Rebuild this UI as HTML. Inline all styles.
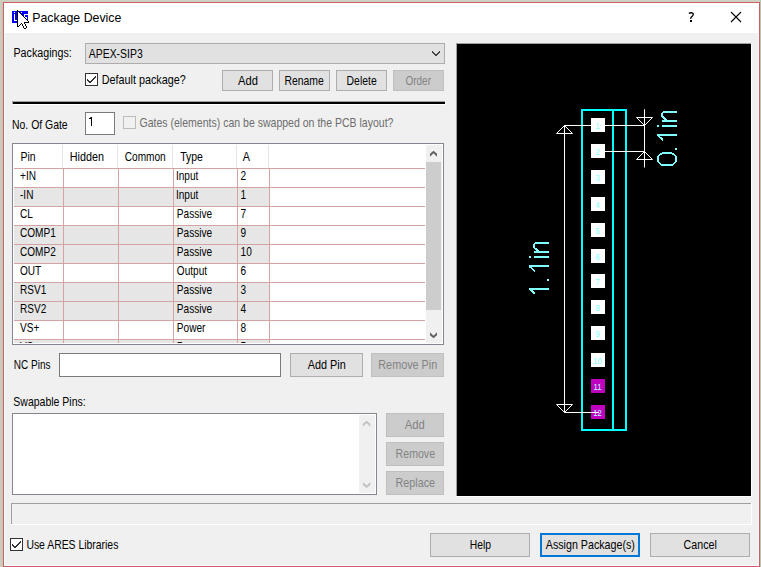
<!DOCTYPE html>
<html><head><meta charset="utf-8"><style>
html,body{margin:0;padding:0;width:761px;height:567px;overflow:hidden;background:#c9cbbb}
svg{display:block}
text{font-family:"Liberation Sans",sans-serif}
</style></head><body>
<svg width="761" height="567" viewBox="0 0 761 567">
<g shape-rendering="crispEdges">
<rect x="0" y="0" width="761" height="567" fill="#c9cbbb"/>
<rect x="0" y="0" width="1" height="567" fill="#cdcdbd"/>
<rect x="1" y="0" width="1" height="567" fill="#c8cbba"/>
<rect x="2" y="0" width="1" height="567" fill="#c2cab6"/>
<rect x="0" y="0" width="761" height="1" fill="#d0d0c2"/>
<rect x="3" y="1" width="757" height="1" fill="#cad0c0"/>
<rect x="760" y="0" width="1" height="567" fill="#bac5b0"/>
<rect x="3" y="2" width="757" height="565" fill="#d05e69"/>
<rect x="4" y="3" width="755" height="30" fill="#ffffff"/>
<rect x="4" y="33" width="755" height="533" fill="#f0f0f0"/>
<rect x="4" y="33" width="1" height="533" fill="#f6fcfc"/>
<rect x="4" y="565" width="755" height="1" fill="#f6fcfc"/>
<rect x="758" y="33" width="1" height="533" fill="#f6fcfc"/>
<rect x="12" y="11" width="16" height="12" fill="#0000ff"/>
<text transform="translate(32.25,22) scale(0.9492,1)" fill="#000" font-size="13" shape-rendering="auto">Package Device</text>
<text transform="translate(13.50,57) scale(0.8902,1)" fill="#000" font-size="12" shape-rendering="auto">Packagings:</text>
<rect x="85" y="43" width="360" height="21" fill="#e1e1e1"/>
<rect x="85" y="43" width="360" height="1" fill="#adadad"/>
<rect x="85" y="63" width="360" height="1" fill="#adadad"/>
<rect x="85" y="43" width="1" height="21" fill="#adadad"/>
<rect x="444" y="43" width="1" height="21" fill="#adadad"/>
<text transform="translate(88.80,58) scale(0.8692,1)" fill="#000" font-size="12" shape-rendering="auto">APEX-SIP3</text>
<polyline points="432,51.8 436,55.8 440,51.8" fill="none" stroke="#404040" stroke-width="1.3"/>
<rect x="85" y="73" width="13" height="13" fill="#ffffff"/>
<rect x="85" y="73" width="13" height="1" fill="#333333"/>
<rect x="85" y="85" width="13" height="1" fill="#333333"/>
<rect x="85" y="73" width="1" height="13" fill="#333333"/>
<rect x="97" y="73" width="1" height="13" fill="#333333"/>
<polyline points="87.2,79.2 90,82.2 95.8,76.3" fill="none" stroke="#333" stroke-width="1.4"/>
<text transform="translate(101.70,84) scale(0.9016,1)" fill="#000" font-size="12" shape-rendering="auto">Default package?</text>
<rect x="222" y="70" width="51" height="21" fill="#e1e1e1"/>
<rect x="222" y="70" width="51" height="1" fill="#adadad"/>
<rect x="222" y="90" width="51" height="1" fill="#adadad"/>
<rect x="222" y="70" width="1" height="21" fill="#adadad"/>
<rect x="272" y="70" width="1" height="21" fill="#adadad"/>
<text transform="translate(238.00,85) scale(0.9334,1)" fill="#000" font-size="12" shape-rendering="auto">Add</text>
<rect x="279" y="70" width="51" height="21" fill="#e1e1e1"/>
<rect x="279" y="70" width="51" height="1" fill="#adadad"/>
<rect x="279" y="90" width="51" height="1" fill="#adadad"/>
<rect x="279" y="70" width="1" height="21" fill="#adadad"/>
<rect x="329" y="70" width="1" height="21" fill="#adadad"/>
<text transform="translate(284.40,85) scale(0.8690,1)" fill="#000" font-size="12" shape-rendering="auto">Rename</text>
<rect x="336" y="70" width="51" height="21" fill="#e1e1e1"/>
<rect x="336" y="70" width="51" height="1" fill="#adadad"/>
<rect x="336" y="90" width="51" height="1" fill="#adadad"/>
<rect x="336" y="70" width="1" height="21" fill="#adadad"/>
<rect x="386" y="70" width="1" height="21" fill="#adadad"/>
<text transform="translate(346.60,85) scale(0.8682,1)" fill="#000" font-size="12" shape-rendering="auto">Delete</text>
<rect x="393" y="70" width="51" height="21" fill="#cccccc"/>
<rect x="393" y="70" width="51" height="1" fill="#bfbfbf"/>
<rect x="393" y="90" width="51" height="1" fill="#bfbfbf"/>
<rect x="393" y="70" width="1" height="21" fill="#bfbfbf"/>
<rect x="443" y="70" width="1" height="21" fill="#bfbfbf"/>
<text transform="translate(405.40,85) scale(0.8345,1)" fill="#838383" font-size="12" shape-rendering="auto">Order</text>
<rect x="12" y="101" width="434" height="1" fill="#a0a0a0"/>
<rect x="12" y="101" width="1" height="3" fill="#a0a0a0"/>
<rect x="13" y="102" width="432" height="2" fill="#000000"/>
<rect x="13" y="104" width="433" height="1" fill="#ffffff"/>
<rect x="445" y="101" width="1" height="4" fill="#ffffff"/>
<text transform="translate(12.00,129) scale(0.8702,1)" fill="#000" font-size="12" shape-rendering="auto">No. Of Gate</text>
<rect x="85" y="112" width="30" height="23" fill="#ffffff"/>
<rect x="85" y="112" width="30" height="1" fill="#7a7a7a"/>
<rect x="85" y="134" width="30" height="1" fill="#7a7a7a"/>
<rect x="85" y="112" width="1" height="23" fill="#7a7a7a"/>
<rect x="114" y="112" width="1" height="23" fill="#7a7a7a"/>
<rect x="91" y="117" width="1" height="9" fill="#000"/>
<rect x="89" y="118" width="2" height="1" fill="#000"/>
<rect x="90" y="117" width="1" height="1" fill="#555"/>
<rect x="123" y="116" width="13" height="13" fill="#f0f0f0"/>
<rect x="123" y="116" width="13" height="1" fill="#bcbcbc"/>
<rect x="123" y="128" width="13" height="1" fill="#bcbcbc"/>
<rect x="123" y="116" width="1" height="13" fill="#bcbcbc"/>
<rect x="135" y="116" width="1" height="13" fill="#bcbcbc"/>
<text transform="translate(139.50,127) scale(0.8781,1)" fill="#6d6d6d" font-size="12" shape-rendering="auto">Gates (elements) can be swapped on the PCB layout?</text>
<rect x="12" y="143" width="432" height="202" fill="#ffffff"/>
<rect x="12" y="143" width="432" height="1" fill="#828790"/>
<rect x="12" y="344" width="432" height="1" fill="#828790"/>
<rect x="12" y="143" width="1" height="202" fill="#828790"/>
<rect x="443" y="143" width="1" height="202" fill="#828790"/>
<rect x="62" y="145" width="1" height="23" fill="#e5e5e5"/>
<rect x="117" y="145" width="1" height="23" fill="#e5e5e5"/>
<rect x="172" y="145" width="1" height="23" fill="#e5e5e5"/>
<rect x="236" y="145" width="1" height="23" fill="#e5e5e5"/>
<rect x="268" y="145" width="1" height="23" fill="#e5e5e5"/>
<text transform="translate(20.60,161) scale(0.8698,1)" fill="#000" font-size="12" shape-rendering="auto">Pin</text>
<text transform="translate(69.70,161) scale(0.8995,1)" fill="#000" font-size="12" shape-rendering="auto">Hidden</text>
<text transform="translate(124.70,161) scale(0.8436,1)" fill="#000" font-size="12" shape-rendering="auto">Common</text>
<text transform="translate(180.20,161) scale(0.8731,1)" fill="#000" font-size="12" shape-rendering="auto">Type</text>
<text transform="translate(242.80,161) scale(0.9000,1)" fill="#000" font-size="12" shape-rendering="auto">A</text>
<svg x="13" y="144" width="413" height="199" overflow="hidden"><g transform="translate(-13,-144)">
<rect x="14" y="168" width="411" height="1" fill="#d4a4a4"/>
<rect x="14" y="188" width="256" height="18" fill="#e6e6e6"/>
<rect x="14" y="187" width="411" height="1" fill="#d4a4a4"/>
<rect x="14" y="206" width="411" height="1" fill="#d4a4a4"/>
<rect x="14" y="226" width="256" height="18" fill="#e6e6e6"/>
<rect x="14" y="225" width="411" height="1" fill="#d4a4a4"/>
<rect x="14" y="245" width="256" height="18" fill="#e6e6e6"/>
<rect x="14" y="244" width="411" height="1" fill="#d4a4a4"/>
<rect x="14" y="263" width="411" height="1" fill="#d4a4a4"/>
<rect x="14" y="283" width="256" height="18" fill="#e6e6e6"/>
<rect x="14" y="282" width="411" height="1" fill="#d4a4a4"/>
<rect x="14" y="302" width="256" height="18" fill="#e6e6e6"/>
<rect x="14" y="301" width="411" height="1" fill="#d4a4a4"/>
<rect x="14" y="320" width="411" height="1" fill="#d4a4a4"/>
<rect x="14" y="340" width="256" height="18" fill="#e6e6e6"/>
<rect x="14" y="339" width="411" height="1" fill="#d4a4a4"/>
<rect x="63" y="168" width="1" height="190" fill="#d4a4a4"/>
<rect x="118" y="168" width="1" height="190" fill="#d4a4a4"/>
<rect x="173" y="168" width="1" height="190" fill="#d4a4a4"/>
<rect x="237" y="168" width="1" height="190" fill="#d4a4a4"/>
<rect x="269" y="168" width="1" height="190" fill="#d4a4a4"/>
<text transform="translate(20.00,180) scale(0.8400,1)" fill="#000" font-size="12" shape-rendering="auto">+IN</text>
<text transform="translate(175.96,180) scale(0.8400,1)" fill="#000" font-size="12" shape-rendering="auto">Input</text>
<text transform="translate(240.60,180) scale(0.8400,1)" fill="#000" font-size="12" shape-rendering="auto">2</text>
<text transform="translate(20.00,199) scale(0.8400,1)" fill="#000" font-size="12" shape-rendering="auto">-IN</text>
<text transform="translate(175.96,199) scale(0.8400,1)" fill="#000" font-size="12" shape-rendering="auto">Input</text>
<text transform="translate(240.60,199) scale(0.8400,1)" fill="#000" font-size="12" shape-rendering="auto">1</text>
<text transform="translate(20.00,218) scale(0.8400,1)" fill="#000" font-size="12" shape-rendering="auto">CL</text>
<text transform="translate(176.80,218) scale(0.8400,1)" fill="#000" font-size="12" shape-rendering="auto">Passive</text>
<text transform="translate(240.60,218) scale(0.8400,1)" fill="#000" font-size="12" shape-rendering="auto">7</text>
<text transform="translate(20.00,237) scale(0.8400,1)" fill="#000" font-size="12" shape-rendering="auto">COMP1</text>
<text transform="translate(176.80,237) scale(0.8400,1)" fill="#000" font-size="12" shape-rendering="auto">Passive</text>
<text transform="translate(240.60,237) scale(0.8400,1)" fill="#000" font-size="12" shape-rendering="auto">9</text>
<text transform="translate(20.00,256) scale(0.8400,1)" fill="#000" font-size="12" shape-rendering="auto">COMP2</text>
<text transform="translate(176.80,256) scale(0.8400,1)" fill="#000" font-size="12" shape-rendering="auto">Passive</text>
<text transform="translate(240.60,256) scale(0.8400,1)" fill="#000" font-size="12" shape-rendering="auto">10</text>
<text transform="translate(20.00,275) scale(0.8400,1)" fill="#000" font-size="12" shape-rendering="auto">OUT</text>
<text transform="translate(176.80,275) scale(0.8400,1)" fill="#000" font-size="12" shape-rendering="auto">Output</text>
<text transform="translate(240.60,275) scale(0.8400,1)" fill="#000" font-size="12" shape-rendering="auto">6</text>
<text transform="translate(20.00,294) scale(0.8400,1)" fill="#000" font-size="12" shape-rendering="auto">RSV1</text>
<text transform="translate(176.80,294) scale(0.8400,1)" fill="#000" font-size="12" shape-rendering="auto">Passive</text>
<text transform="translate(240.60,294) scale(0.8400,1)" fill="#000" font-size="12" shape-rendering="auto">3</text>
<text transform="translate(20.00,313) scale(0.8400,1)" fill="#000" font-size="12" shape-rendering="auto">RSV2</text>
<text transform="translate(176.80,313) scale(0.8400,1)" fill="#000" font-size="12" shape-rendering="auto">Passive</text>
<text transform="translate(240.60,313) scale(0.8400,1)" fill="#000" font-size="12" shape-rendering="auto">4</text>
<text transform="translate(20.00,332) scale(0.8400,1)" fill="#000" font-size="12" shape-rendering="auto">VS+</text>
<text transform="translate(176.80,332) scale(0.8400,1)" fill="#000" font-size="12" shape-rendering="auto">Power</text>
<text transform="translate(240.60,332) scale(0.8400,1)" fill="#000" font-size="12" shape-rendering="auto">8</text>
<text transform="translate(20.00,351) scale(0.8400,1)" fill="#000" font-size="12" shape-rendering="auto">VS-</text>
<text transform="translate(176.80,351) scale(0.8400,1)" fill="#000" font-size="12" shape-rendering="auto">Power</text>
<text transform="translate(240.60,351) scale(0.8400,1)" fill="#000" font-size="12" shape-rendering="auto">5</text>
</g></svg>
<rect x="426" y="145" width="16" height="198" fill="#f0f0f0"/>
<rect x="426" y="162" width="15" height="148" fill="#cdcdcd"/>
<polygon points="430,153.8 433.5,150.8 437,153.8 437,156.8 433.5,153.35000000000002 430,156.8" fill="#606060" shape-rendering="auto"/>
<polygon points="430,335.2 433.5,338.2 437,335.2 437,332.2 433.5,335.65 430,332.2" fill="#606060" shape-rendering="auto"/>
<text transform="translate(13.80,369) scale(0.8339,1)" fill="#000" font-size="12" shape-rendering="auto">NC Pins</text>
<rect x="59" y="353" width="222" height="24" fill="#ffffff"/>
<rect x="59" y="353" width="222" height="1" fill="#7a7a7a"/>
<rect x="59" y="376" width="222" height="1" fill="#7a7a7a"/>
<rect x="59" y="353" width="1" height="24" fill="#7a7a7a"/>
<rect x="280" y="353" width="1" height="24" fill="#7a7a7a"/>
<rect x="290" y="353" width="73" height="24" fill="#e1e1e1"/>
<rect x="290" y="353" width="73" height="1" fill="#adadad"/>
<rect x="290" y="376" width="73" height="1" fill="#adadad"/>
<rect x="290" y="353" width="1" height="24" fill="#adadad"/>
<rect x="362" y="353" width="1" height="24" fill="#adadad"/>
<text transform="translate(307.80,369) scale(0.9044,1)" fill="#000" font-size="12" shape-rendering="auto">Add Pin</text>
<rect x="371" y="353" width="73" height="24" fill="#cccccc"/>
<rect x="371" y="353" width="73" height="1" fill="#bfbfbf"/>
<rect x="371" y="376" width="73" height="1" fill="#bfbfbf"/>
<rect x="371" y="353" width="1" height="24" fill="#bfbfbf"/>
<rect x="443" y="353" width="1" height="24" fill="#bfbfbf"/>
<text transform="translate(378.30,369) scale(0.9028,1)" fill="#838383" font-size="12" shape-rendering="auto">Remove Pin</text>
<text transform="translate(13.30,406) scale(0.8764,1)" fill="#000" font-size="12" shape-rendering="auto">Swapable Pins:</text>
<rect x="12" y="413" width="365" height="82" fill="#ffffff"/>
<rect x="12" y="413" width="365" height="1" fill="#828790"/>
<rect x="12" y="494" width="365" height="1" fill="#828790"/>
<rect x="12" y="413" width="1" height="82" fill="#828790"/>
<rect x="376" y="413" width="1" height="82" fill="#828790"/>
<rect x="359" y="415" width="16" height="78" fill="#f0f0f0"/>
<polygon points="362.9,423.8 366.6,420.8 370.3,423.8 370.3,426.8 366.6,423.35 362.9,426.8" fill="#c2c2c2" shape-rendering="auto"/>
<polygon points="362.9,485.1 366.6,488 370.3,485.1 370.3,482.1 366.6,485.45 362.9,482.1" fill="#c2c2c2" shape-rendering="auto"/>
<rect x="386" y="413" width="58" height="24" fill="#cccccc"/>
<rect x="386" y="413" width="58" height="1" fill="#bfbfbf"/>
<rect x="386" y="436" width="58" height="1" fill="#bfbfbf"/>
<rect x="386" y="413" width="1" height="24" fill="#bfbfbf"/>
<rect x="443" y="413" width="1" height="24" fill="#bfbfbf"/>
<text transform="translate(404.80,429) scale(0.9382,1)" fill="#838383" font-size="12" shape-rendering="auto">Add</text>
<rect x="386" y="442" width="58" height="24" fill="#cccccc"/>
<rect x="386" y="442" width="58" height="1" fill="#bfbfbf"/>
<rect x="386" y="465" width="58" height="1" fill="#bfbfbf"/>
<rect x="386" y="442" width="1" height="24" fill="#bfbfbf"/>
<rect x="443" y="442" width="1" height="24" fill="#bfbfbf"/>
<text transform="translate(395.60,458) scale(0.8843,1)" fill="#838383" font-size="12" shape-rendering="auto">Remove</text>
<rect x="386" y="471" width="58" height="24" fill="#cccccc"/>
<rect x="386" y="471" width="58" height="1" fill="#bfbfbf"/>
<rect x="386" y="494" width="58" height="1" fill="#bfbfbf"/>
<rect x="386" y="471" width="1" height="24" fill="#bfbfbf"/>
<rect x="443" y="471" width="1" height="24" fill="#bfbfbf"/>
<text transform="translate(395.60,487) scale(0.8973,1)" fill="#838383" font-size="12" shape-rendering="auto">Replace</text>
<rect x="11" y="503" width="740" height="1" fill="#a0a0a0"/>
<rect x="11" y="503" width="1" height="21" fill="#a0a0a0"/>
<rect x="11" y="524" width="741" height="1" fill="#ffffff"/>
<rect x="751" y="503" width="1" height="22" fill="#ffffff"/>
<rect x="10" y="538" width="13" height="13" fill="#ffffff"/>
<rect x="10" y="538" width="13" height="1" fill="#333333"/>
<rect x="10" y="550" width="13" height="1" fill="#333333"/>
<rect x="10" y="538" width="1" height="13" fill="#333333"/>
<rect x="22" y="538" width="1" height="13" fill="#333333"/>
<polyline points="12.2,544.2 15,547.2 20.8,541.3" fill="none" stroke="#333" stroke-width="1.4"/>
<text transform="translate(26.40,549) scale(0.8687,1)" fill="#000" font-size="12" shape-rendering="auto">Use ARES Libraries</text>
<rect x="430" y="533" width="100" height="24" fill="#e1e1e1"/>
<rect x="430" y="533" width="100" height="1" fill="#adadad"/>
<rect x="430" y="556" width="100" height="1" fill="#adadad"/>
<rect x="430" y="533" width="1" height="24" fill="#adadad"/>
<rect x="529" y="533" width="1" height="24" fill="#adadad"/>
<text transform="translate(469.70,549) scale(0.8638,1)" fill="#000" font-size="12" shape-rendering="auto">Help</text>
<rect x="540" y="533" width="100" height="24" fill="#0078d7"/>
<rect x="542" y="535" width="96" height="20" fill="#e1e1e1"/>
<text transform="translate(545.80,549) scale(0.8906,1)" fill="#000" font-size="12" shape-rendering="auto">Assign Package(s)</text>
<rect x="650" y="533" width="100" height="24" fill="#e1e1e1"/>
<rect x="650" y="533" width="100" height="1" fill="#adadad"/>
<rect x="650" y="556" width="100" height="1" fill="#adadad"/>
<rect x="650" y="533" width="1" height="24" fill="#adadad"/>
<rect x="749" y="533" width="1" height="24" fill="#adadad"/>
<text transform="translate(683.60,549) scale(0.8886,1)" fill="#000" font-size="12" shape-rendering="auto">Cancel</text>
<rect x="456" y="43" width="296" height="454" fill="#ffffff"/>
<rect x="456" y="43" width="295" height="1" fill="#a0a0a0"/>
<rect x="456" y="43" width="1" height="453" fill="#a0a0a0"/>
<rect x="457" y="44" width="294" height="452" fill="#000000"/>
<g shape-rendering="auto">
<rect x="581" y="109" width="46" height="2" fill="#00ffff"/>
<rect x="581" y="429" width="46" height="2" fill="#00ffff"/>
<rect x="581" y="109" width="2" height="322" fill="#00ffff"/>
<rect x="625" y="109" width="2" height="322" fill="#00ffff"/>
<rect x="612" y="109" width="2" height="322" fill="#00ffff"/>
<g stroke="#ffffff" stroke-width="1" fill="none">
<path d="M564.5,125.5 H644.5 M564.5,125.5 V412.5 M564.5,412.5 H599 M605,151.5 H644.5 M644.5,109.2 V167.5"/>
<path d="M564.5,125.5 L556.5,133.5 H572.5 Z"/>
<path d="M564.5,412.5 L556.5,404.5 H572.5 Z"/>
<path d="M644.5,125.5 L636.5,117.5 H652.5 Z"/>
<path d="M644.5,151.5 L636.5,159.5 H652.5 Z"/>
</g>
<rect x="591" y="118" width="14" height="14" fill="#ffffff"/>
<rect x="591" y="144" width="14" height="14" fill="#ffffff"/>
<rect x="591" y="170" width="14" height="14" fill="#ffffff"/>
<rect x="591" y="197" width="14" height="14" fill="#ffffff"/>
<rect x="591" y="223" width="14" height="14" fill="#ffffff"/>
<rect x="591" y="249" width="14" height="14" fill="#ffffff"/>
<rect x="591" y="274" width="14" height="14" fill="#ffffff"/>
<rect x="591" y="300" width="14" height="14" fill="#ffffff"/>
<rect x="591" y="326" width="14" height="14" fill="#ffffff"/>
<rect x="591" y="353" width="14" height="14" fill="#ffffff"/>
<rect x="591" y="379" width="14" height="14" fill="#c000c0"/>
<rect x="591" y="405" width="14" height="14" fill="#c000c0"/>
<path d="M591,412.5 H599" stroke="#ffffff" stroke-width="1" fill="none"/>
</g>
<g fill="none" stroke="#80ffff" stroke-width="1.7" stroke-linecap="butt" stroke-linejoin="round">
<g transform="translate(549,295) rotate(-90)"><path d="M6.2,0 V-19.6 L1.2,-14 M28.7,0 V-19.6 L23.7,-14 M38,0 V-14.8 M43,0 V-14.8 M43,-10 L47.5,-14.8 H50.6 L52,-13.4 V0"/><rect x="14.4" y="-2" width="2" height="2" fill="#80ffff" stroke="none"/><rect x="37" y="-20" width="2" height="2" fill="#80ffff" stroke="none"/></g>
<g transform="translate(677,166) rotate(-90)"><rect x="0.8" y="-19.2" width="12.2" height="18.4" rx="6" ry="6.5"/><path d="M31.2,0 V-19.6 L26,-14 M40.3,0 V-14.8 M45.3,0 V-14.8 M45.3,-10 L49.6,-14.8 H52.6 L54,-13.4 V0"/><rect x="16" y="-2" width="2" height="2" fill="#80ffff" stroke="none"/><rect x="39.3" y="-20" width="2" height="2" fill="#80ffff" stroke="none"/></g>
</g>
<text x="597.5" y="129" font-size="9.5" text-anchor="middle" fill="#80ffff" transform="translate(597.5,0) scale(0.8,1) translate(-597.5,0)">1</text>
<text x="597.5" y="155" font-size="9.5" text-anchor="middle" fill="#80ffff" transform="translate(597.5,0) scale(0.8,1) translate(-597.5,0)">2</text>
<text x="597.5" y="181" font-size="9.5" text-anchor="middle" fill="#80ffff" transform="translate(597.5,0) scale(0.8,1) translate(-597.5,0)">3</text>
<text x="597.5" y="208" font-size="9.5" text-anchor="middle" fill="#80ffff" transform="translate(597.5,0) scale(0.8,1) translate(-597.5,0)">4</text>
<text x="597.5" y="234" font-size="9.5" text-anchor="middle" fill="#80ffff" transform="translate(597.5,0) scale(0.8,1) translate(-597.5,0)">5</text>
<text x="597.5" y="260" font-size="9.5" text-anchor="middle" fill="#80ffff" transform="translate(597.5,0) scale(0.8,1) translate(-597.5,0)">6</text>
<text x="597.5" y="285" font-size="9.5" text-anchor="middle" fill="#80ffff" transform="translate(597.5,0) scale(0.8,1) translate(-597.5,0)">7</text>
<text x="597.5" y="311" font-size="9.5" text-anchor="middle" fill="#80ffff" transform="translate(597.5,0) scale(0.8,1) translate(-597.5,0)">8</text>
<text x="597.5" y="337" font-size="9.5" text-anchor="middle" fill="#80ffff" transform="translate(597.5,0) scale(0.8,1) translate(-597.5,0)">9</text>
<text x="597.5" y="364" font-size="9.5" text-anchor="middle" fill="#80ffff" transform="translate(597.5,0) scale(0.8,1) translate(-597.5,0)">10</text>
<text x="597.5" y="390" font-size="9.5" text-anchor="middle" fill="#b0ffff" transform="translate(597.5,0) scale(0.8,1) translate(-597.5,0)">11</text>
<text x="597.5" y="416" font-size="9.5" text-anchor="middle" fill="#b0ffff" transform="translate(597.5,0) scale(0.8,1) translate(-597.5,0)">12</text>
<path d="M688.9,13.4 Q689.8,12.7 691.3,12.7 Q693.3,12.8 693.2,14.5 Q693.1,15.8 691.6,16.8 Q690.6,17.6 690.7,18.9" stroke="#000" stroke-width="1.35" fill="none" shape-rendering="auto"/>
<rect x="690" y="20" width="2" height="2" fill="#000"/>
<path d="M731,12 L741,22 M741,12 L731,22" stroke="#000" stroke-width="1.1" fill="none" shape-rendering="auto"/>
<rect x="14" y="12" width="1" height="1" fill="#ffffff"/>
<rect x="14" y="14" width="1" height="7" fill="#ffffff"/>
<rect x="14" y="20" width="3" height="1" fill="#ffffff"/>
<rect x="21" y="12" width="1" height="1" fill="#ffffff"/>
<rect x="24" y="14" width="4" height="1" fill="#ffffff"/>
<rect x="24" y="14" width="1" height="3" fill="#ffffff"/>
<rect x="24" y="17" width="3" height="1" fill="#ffffff"/>
<rect x="26" y="17" width="1" height="3" fill="#ffffff"/>
<rect x="23" y="20" width="4" height="1" fill="#ffffff"/>
<rect x="17" y="10" width="1" height="1" fill="#000000"/>
<rect x="17" y="11" width="1" height="1" fill="#000000"/>
<rect x="18" y="11" width="1" height="1" fill="#000000"/>
<rect x="17" y="12" width="1" height="1" fill="#000000"/>
<rect x="18" y="12" width="1" height="1" fill="#ffffff"/>
<rect x="19" y="12" width="1" height="1" fill="#000000"/>
<rect x="17" y="13" width="1" height="1" fill="#000000"/>
<rect x="18" y="13" width="1" height="1" fill="#ffffff"/>
<rect x="19" y="13" width="1" height="1" fill="#ffffff"/>
<rect x="20" y="13" width="1" height="1" fill="#000000"/>
<rect x="17" y="14" width="1" height="1" fill="#000000"/>
<rect x="18" y="14" width="1" height="1" fill="#ffffff"/>
<rect x="19" y="14" width="1" height="1" fill="#ffffff"/>
<rect x="20" y="14" width="1" height="1" fill="#ffffff"/>
<rect x="21" y="14" width="1" height="1" fill="#000000"/>
<rect x="17" y="15" width="1" height="1" fill="#000000"/>
<rect x="18" y="15" width="1" height="1" fill="#ffffff"/>
<rect x="19" y="15" width="1" height="1" fill="#ffffff"/>
<rect x="20" y="15" width="1" height="1" fill="#ffffff"/>
<rect x="21" y="15" width="1" height="1" fill="#ffffff"/>
<rect x="22" y="15" width="1" height="1" fill="#000000"/>
<rect x="17" y="16" width="1" height="1" fill="#000000"/>
<rect x="18" y="16" width="1" height="1" fill="#ffffff"/>
<rect x="19" y="16" width="1" height="1" fill="#ffffff"/>
<rect x="20" y="16" width="1" height="1" fill="#ffffff"/>
<rect x="21" y="16" width="1" height="1" fill="#ffffff"/>
<rect x="22" y="16" width="1" height="1" fill="#ffffff"/>
<rect x="23" y="16" width="1" height="1" fill="#000000"/>
<rect x="17" y="17" width="1" height="1" fill="#000000"/>
<rect x="18" y="17" width="1" height="1" fill="#ffffff"/>
<rect x="19" y="17" width="1" height="1" fill="#ffffff"/>
<rect x="20" y="17" width="1" height="1" fill="#ffffff"/>
<rect x="21" y="17" width="1" height="1" fill="#ffffff"/>
<rect x="22" y="17" width="1" height="1" fill="#ffffff"/>
<rect x="23" y="17" width="1" height="1" fill="#ffffff"/>
<rect x="24" y="17" width="1" height="1" fill="#000000"/>
<rect x="17" y="18" width="1" height="1" fill="#000000"/>
<rect x="18" y="18" width="1" height="1" fill="#ffffff"/>
<rect x="19" y="18" width="1" height="1" fill="#ffffff"/>
<rect x="20" y="18" width="1" height="1" fill="#ffffff"/>
<rect x="21" y="18" width="1" height="1" fill="#ffffff"/>
<rect x="22" y="18" width="1" height="1" fill="#ffffff"/>
<rect x="23" y="18" width="1" height="1" fill="#ffffff"/>
<rect x="24" y="18" width="1" height="1" fill="#ffffff"/>
<rect x="25" y="18" width="1" height="1" fill="#000000"/>
<rect x="17" y="19" width="1" height="1" fill="#000000"/>
<rect x="18" y="19" width="1" height="1" fill="#ffffff"/>
<rect x="19" y="19" width="1" height="1" fill="#ffffff"/>
<rect x="20" y="19" width="1" height="1" fill="#ffffff"/>
<rect x="21" y="19" width="1" height="1" fill="#ffffff"/>
<rect x="22" y="19" width="1" height="1" fill="#ffffff"/>
<rect x="23" y="19" width="1" height="1" fill="#ffffff"/>
<rect x="24" y="19" width="1" height="1" fill="#ffffff"/>
<rect x="25" y="19" width="1" height="1" fill="#ffffff"/>
<rect x="26" y="19" width="1" height="1" fill="#000000"/>
<rect x="17" y="20" width="1" height="1" fill="#000000"/>
<rect x="18" y="20" width="1" height="1" fill="#ffffff"/>
<rect x="19" y="20" width="1" height="1" fill="#ffffff"/>
<rect x="20" y="20" width="1" height="1" fill="#ffffff"/>
<rect x="21" y="20" width="1" height="1" fill="#ffffff"/>
<rect x="22" y="20" width="1" height="1" fill="#ffffff"/>
<rect x="23" y="20" width="1" height="1" fill="#ffffff"/>
<rect x="24" y="20" width="1" height="1" fill="#ffffff"/>
<rect x="25" y="20" width="1" height="1" fill="#ffffff"/>
<rect x="26" y="20" width="1" height="1" fill="#ffffff"/>
<rect x="27" y="20" width="1" height="1" fill="#000000"/>
<rect x="17" y="21" width="1" height="1" fill="#000000"/>
<rect x="18" y="21" width="1" height="1" fill="#ffffff"/>
<rect x="19" y="21" width="1" height="1" fill="#ffffff"/>
<rect x="20" y="21" width="1" height="1" fill="#ffffff"/>
<rect x="21" y="21" width="1" height="1" fill="#ffffff"/>
<rect x="22" y="21" width="1" height="1" fill="#ffffff"/>
<rect x="23" y="21" width="1" height="1" fill="#ffffff"/>
<rect x="24" y="21" width="1" height="1" fill="#ffffff"/>
<rect x="25" y="21" width="1" height="1" fill="#ffffff"/>
<rect x="26" y="21" width="1" height="1" fill="#ffffff"/>
<rect x="27" y="21" width="1" height="1" fill="#ffffff"/>
<rect x="28" y="21" width="1" height="1" fill="#000000"/>
<rect x="17" y="22" width="1" height="1" fill="#000000"/>
<rect x="18" y="22" width="1" height="1" fill="#ffffff"/>
<rect x="19" y="22" width="1" height="1" fill="#ffffff"/>
<rect x="20" y="22" width="1" height="1" fill="#ffffff"/>
<rect x="21" y="22" width="1" height="1" fill="#ffffff"/>
<rect x="22" y="22" width="1" height="1" fill="#ffffff"/>
<rect x="23" y="22" width="1" height="1" fill="#ffffff"/>
<rect x="24" y="22" width="1" height="1" fill="#000000"/>
<rect x="25" y="22" width="1" height="1" fill="#000000"/>
<rect x="26" y="22" width="1" height="1" fill="#000000"/>
<rect x="27" y="22" width="1" height="1" fill="#000000"/>
<rect x="28" y="22" width="1" height="1" fill="#000000"/>
<rect x="17" y="23" width="1" height="1" fill="#000000"/>
<rect x="18" y="23" width="1" height="1" fill="#ffffff"/>
<rect x="19" y="23" width="1" height="1" fill="#ffffff"/>
<rect x="20" y="23" width="1" height="1" fill="#ffffff"/>
<rect x="21" y="23" width="1" height="1" fill="#000000"/>
<rect x="22" y="23" width="1" height="1" fill="#ffffff"/>
<rect x="23" y="23" width="1" height="1" fill="#ffffff"/>
<rect x="24" y="23" width="1" height="1" fill="#000000"/>
<rect x="17" y="24" width="1" height="1" fill="#000000"/>
<rect x="18" y="24" width="1" height="1" fill="#ffffff"/>
<rect x="19" y="24" width="1" height="1" fill="#ffffff"/>
<rect x="20" y="24" width="1" height="1" fill="#000000"/>
<rect x="22" y="24" width="1" height="1" fill="#000000"/>
<rect x="23" y="24" width="1" height="1" fill="#ffffff"/>
<rect x="24" y="24" width="1" height="1" fill="#ffffff"/>
<rect x="25" y="24" width="1" height="1" fill="#000000"/>
<rect x="17" y="25" width="1" height="1" fill="#000000"/>
<rect x="18" y="25" width="1" height="1" fill="#ffffff"/>
<rect x="19" y="25" width="1" height="1" fill="#000000"/>
<rect x="22" y="25" width="1" height="1" fill="#000000"/>
<rect x="23" y="25" width="1" height="1" fill="#ffffff"/>
<rect x="24" y="25" width="1" height="1" fill="#ffffff"/>
<rect x="25" y="25" width="1" height="1" fill="#000000"/>
<rect x="17" y="26" width="1" height="1" fill="#000000"/>
<rect x="18" y="26" width="1" height="1" fill="#000000"/>
<rect x="23" y="26" width="1" height="1" fill="#000000"/>
<rect x="24" y="26" width="1" height="1" fill="#ffffff"/>
<rect x="25" y="26" width="1" height="1" fill="#ffffff"/>
<rect x="26" y="26" width="1" height="1" fill="#000000"/>
<rect x="23" y="27" width="1" height="1" fill="#000000"/>
<rect x="24" y="27" width="1" height="1" fill="#ffffff"/>
<rect x="25" y="27" width="1" height="1" fill="#ffffff"/>
<rect x="26" y="27" width="1" height="1" fill="#000000"/>
<rect x="24" y="28" width="1" height="1" fill="#000000"/>
<rect x="25" y="28" width="1" height="1" fill="#000000"/>
</g>
</svg>
</body></html>
